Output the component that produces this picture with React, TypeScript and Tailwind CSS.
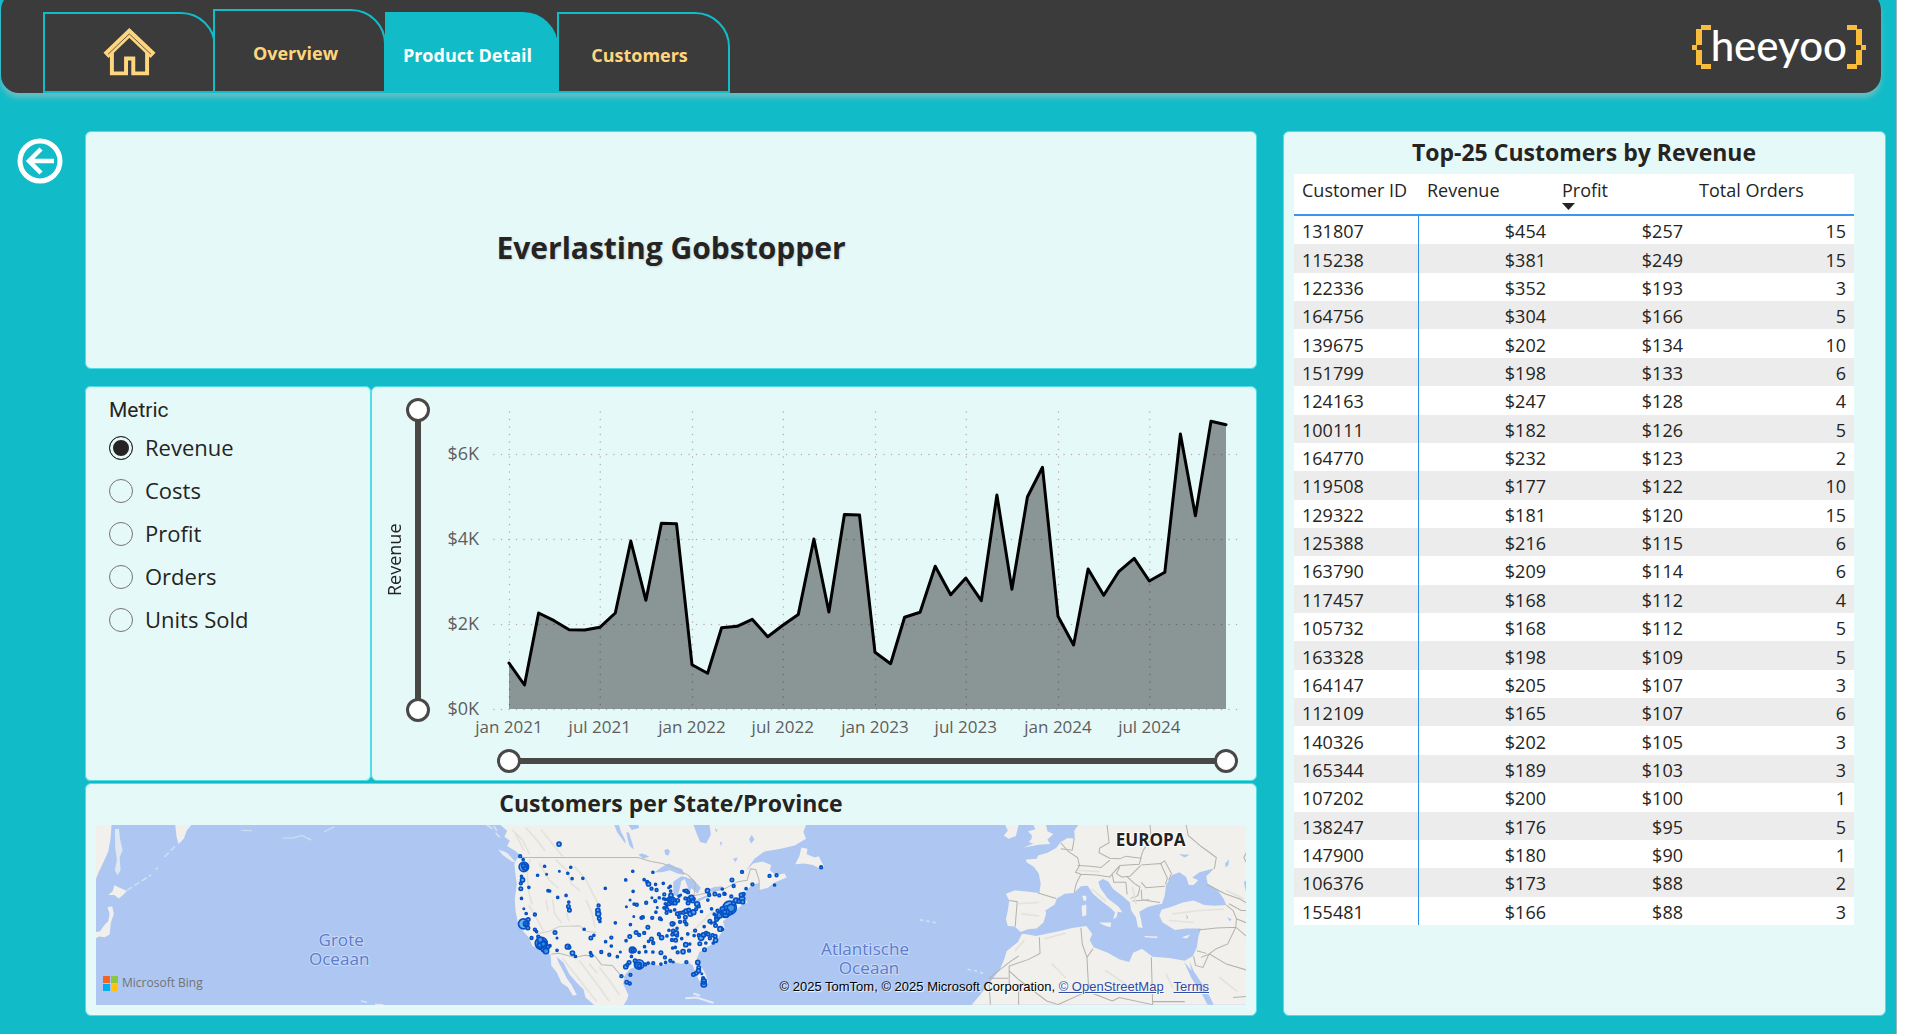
import { useState } from 'react';

const tabs = [
    { label: 'Overview', active: false, height: 'h-[84px]' },
    { label: 'Product Detail', active: true, height: 'h-[81px]' },
    { label: 'Customers', active: false, height: 'h-[81px]' },
];

const metrics = ['Revenue', 'Costs', 'Profit', 'Orders', 'Units Sold'];

const customers: [number, number, number, number][] = [
    [131807, 454, 257, 15],
    [115238, 381, 249, 15],
    [122336, 352, 193, 3],
    [164756, 304, 166, 5],
    [139675, 202, 134, 10],
    [151799, 198, 133, 6],
    [124163, 247, 128, 4],
    [100111, 182, 126, 5],
    [164770, 232, 123, 2],
    [119508, 177, 122, 10],
    [129322, 181, 120, 15],
    [125388, 216, 115, 6],
    [163790, 209, 114, 6],
    [117457, 168, 112, 4],
    [105732, 168, 112, 5],
    [163328, 198, 109, 5],
    [164147, 205, 107, 3],
    [112109, 165, 107, 6],
    [140326, 202, 105, 3],
    [165344, 189, 103, 3],
    [107202, 200, 100, 1],
    [138247, 176, 95, 5],
    [147900, 180, 90, 1],
    [106376, 173, 88, 2],
    [155481, 166, 88, 3],
];

// monthly revenue, jan 2021 - dec 2024
const revenue = [
    1082, 565, 2259, 2078, 1867, 1859, 1922, 2259, 3953, 2557, 4369, 4361,
    1043, 839, 1914, 1945, 2110, 1702, 1969, 2227, 4000, 2282, 4573, 4565,
    1333, 1067, 2157, 2275, 3357, 2690, 3082, 2549, 5035, 2816, 4988, 5686,
    2180, 1506, 3294, 2675, 3231, 3545, 3012, 3216, 6471, 4549, 6769, 6690,
];

const DAY = 86400000;
const START = Date.UTC(2021, 0, 1);
const END = Date.UTC(2024, 11, 1);
const PLOT = { left: 67, right: 784, base: 322, perK: 42.5 };

const xAt = (month: number) => {
    const t = Date.UTC(2021, month, 1);
    return PLOT.left + ((t - START) / DAY) * ((PLOT.right - PLOT.left) / ((END - START) / DAY));
};
const yAt = (value: number) => PLOT.base - (value / 1000) * PLOT.perK;

const xTicks = [0, 6, 12, 18, 24, 30, 36, 42];
const yTicks = [0, 2, 4, 6];

function RevenueChart() {
    const line = revenue.map((v, i) => `${xAt(i).toFixed(1)},${yAt(v).toFixed(1)}`).join(' ');
    return (
        <svg viewBox="0 0 814 354" className="block w-full" role="img" aria-label="Revenue per month">
            <g stroke="#b9a9ad" strokeWidth="1.5" strokeLinecap="round" strokeDasharray="0 7.5">
                {yTicks.map((t) => (
                    <line key={t} x1="52" x2="800" y1={yAt(t * 1000) + 0.5} y2={yAt(t * 1000) + 0.5} />
                ))}
                {xTicks.map((m) => (
                    <line key={m} x1={xAt(m) + 0.5} x2={xAt(m) + 0.5} y1="25" y2="322" />
                ))}
            </g>
            <polygon points={`${PLOT.left},${PLOT.base} ${line} ${PLOT.right},${PLOT.base}`} fill="#000" fillOpacity="0.4" />
            <polyline points={line} fill="none" stroke="#000" strokeWidth="3" strokeLinejoin="round" strokeLinecap="round" />
            <g fill="#605e5c" fontSize="18" textAnchor="end">
                {yTicks.map((t) => (
                    <text key={t} x="37" y={yAt(t * 1000) + 6}>{`$${t}K`}</text>
                ))}
            </g>
            <g fill="#605e5c" fontSize="17" textAnchor="middle">
                {xTicks.map((m) => (
                    <text key={m} x={xAt(m)} y="346">
                        {`${m % 12 === 0 ? 'jan' : 'jul'} ${2021 + Math.floor(m / 12)}`}
                    </text>
                ))}
            </g>
        </svg>
    );
}

const thumb =
    'pointer-events-none absolute inset-0 m-0 h-full w-full appearance-none bg-transparent [&::-webkit-slider-thumb]:pointer-events-auto [&::-webkit-slider-thumb]:h-6 [&::-webkit-slider-thumb]:w-6 [&::-webkit-slider-thumb]:appearance-none [&::-webkit-slider-thumb]:rounded-full [&::-webkit-slider-thumb]:border-3 [&::-webkit-slider-thumb]:border-[#4a4846] [&::-webkit-slider-thumb]:bg-white';

function ZoomSlider({ vertical = false }: { vertical?: boolean }) {
    const axis = vertical ? 'Y axis' : 'X axis';
    const dir = vertical ? ' [writing-mode:vertical-lr] [direction:rtl]' : '';
    return (
        <div className={vertical ? 'relative flex h-[324px] w-6 justify-center py-3' : 'relative flex h-6 w-full items-center px-3'}>
            <div className={vertical ? 'h-full w-1.5 bg-[#4a4846]' : 'h-1.5 w-full bg-[#4a4846]'} />
            <input type="range" aria-label={`${axis} zoom start`} defaultValue={0} className={thumb + dir} />
            <input type="range" aria-label={`${axis} zoom end`} defaultValue={100} className={thumb + dir} />
        </div>
    );
}

// [x, y, radius] of each customer location
const bubbles: [number, number, number][] = [
    [239, 132, 7], [123, 168, 5], [132, 178, 4], [134, 200, 15], [137, 200, 9], [127, 228, 4], [130, 239, 7], [125, 249, 5], [125, 265, 6],
    [149, 261, 4], [127, 294, 4], [134, 325, 3], [141, 339, 4], [167, 342, 5], [133, 370, 16], [141, 370, 9], [147, 357, 6], [146, 382, 6],
    [167, 387, 5], [172, 393, 4], [157, 412, 5], [177, 408, 5], [186, 428, 19], [188, 432, 15], [183, 418, 9], [194, 445, 9], [200, 451, 9],
    [206, 438, 6], [212, 435, 4], [196, 198, 4], [175, 225, 4], [202, 222, 3], [240, 213, 3], [274, 201, 4], [265, 219, 4], [278, 235, 4],
    [310, 234, 4], [206, 271, 4], [211, 272, 4], [235, 291, 4], [260, 285, 4], [268, 305, 4], [267, 318, 6], [270, 329, 6], [377, 264, 4],
    [357, 315, 5], [355, 330, 7], [356, 340, 8], [359, 354, 6], [361, 363, 4], [407, 367, 4], [314, 386, 4], [227, 396, 6], [233, 412, 3],
    [233, 449, 4], [265, 438, 8], [270, 440, 5], [279, 457, 7], [288, 467, 4], [334, 412, 6], [343, 404, 4], [378, 423, 4], [395, 411, 5],
    [395, 436, 4], [365, 454, 5], [333, 456, 4], [336, 464, 5], [389, 462, 5], [413, 468, 4], [422, 454, 3], [459, 213, 4], [438, 239, 4],
    [519, 216, 4], [493, 238, 4], [502, 245, 5], [506, 251, 7], [527, 252, 4], [515, 265, 5], [530, 269, 5], [550, 249, 4], [460, 273, 4],
    [451, 299, 3], [440, 319, 3], [463, 311, 4], [471, 313, 5], [499, 307, 5], [516, 292, 3], [526, 302, 5], [538, 292, 4], [532, 321, 3],
    [528, 335, 4], [553, 282, 5], [551, 295, 4], [557, 297, 4], [571, 258, 4], [566, 262, 3], [572, 272, 4], [573, 285, 7], [570, 297, 8],
    [577, 302, 12], [585, 307, 7], [567, 310, 6], [593, 300, 6], [597, 287, 4], [602, 284, 3], [612, 271, 4], [619, 272, 6], [624, 276, 5],
    [616, 294, 5], [628, 297, 8], [634, 292, 8], [638, 302, 6], [624, 308, 6], [642, 295, 4], [651, 311, 8], [656, 318, 5], [552, 322, 4],
    [561, 327, 6], [560, 337, 5], [572, 332, 4], [584, 328, 4], [592, 340, 6], [597, 349, 5], [600, 337, 5], [610, 336, 6], [618, 332, 7],
    [626, 329, 6], [631, 340, 8], [640, 335, 8], [616, 350, 6], [664, 333, 4], [648, 326, 5], [462, 348, 3], [485, 352, 5], [489, 350, 5],
    [517, 352, 5], [540, 354, 5], [544, 357, 4], [600, 364, 5], [614, 363, 5], [619, 371, 5], [577, 370, 7], [582, 369, 4], [504, 380, 6],
    [452, 372, 4], [591, 383, 4], [567, 389, 4], [580, 391, 6], [588, 398, 8], [577, 402, 5], [591, 405, 5], [623, 400, 4], [645, 390, 5],
    [642, 405, 4], [450, 408, 6], [439, 420, 4], [469, 396, 6], [478, 403, 5], [493, 397, 5], [515, 415, 6], [520, 427, 5], [506, 422, 4],
    [537, 401, 5], [545, 411, 7], [561, 406, 4], [576, 418, 5], [587, 419, 6], [605, 414, 4], [494, 438, 4], [458, 448, 10], [464, 449, 6],
    [478, 455, 4], [498, 453, 4], [519, 454, 4], [543, 456, 6], [578, 442, 4], [586, 440, 4], [593, 455, 5], [609, 453, 7], [617, 432, 7],
    [629, 430, 4], [627, 450, 5], [555, 470, 5], [571, 480, 5], [557, 485, 4], [543, 490, 4], [580, 484, 3], [520, 487, 5], [505, 487, 4],
    [496, 491, 5], [478, 491, 15], [476, 494, 10], [466, 480, 6], [455, 467, 4], [448, 485, 6], [438, 498, 7], [443, 492, 5], [425, 526, 5],
    [452, 522, 5], [441, 544, 6], [450, 548, 5], [619, 484, 5], [653, 485, 7], [656, 500, 6], [655, 510, 7], [648, 517, 6], [640, 521, 6],
    [665, 519, 3], [669, 532, 5], [671, 541, 8], [671, 550, 9], [659, 429, 6], [677, 427, 4], [663, 411, 9], [670, 403, 7], [678, 398, 6],
    [684, 401, 6], [689, 413, 5], [697, 404, 5], [705, 407, 6], [706, 419, 7], [699, 427, 4], [656, 404, 5], [673, 447, 6], [672, 378, 4],
    [689, 362, 6], [693, 367, 4], [706, 375, 6], [720, 385, 8], [727, 386, 4], [704, 366, 4], [711, 350, 8], [718, 344, 9], [709, 357, 6],
    [748, 322, 21], [730, 335, 12], [735, 338, 14], [741, 331, 16], [752, 323, 12], [727, 326, 8], [702, 341, 4], [694, 325, 4], [712, 331, 5],
    [736, 342, 9], [740, 334, 8], [733, 334, 7], [760, 308, 7], [767, 300, 8], [776, 302, 7], [785, 295, 9], [787, 304, 7], [783, 284, 7],
    [790, 281, 5], [753, 288, 5], [732, 280, 5], [726, 266, 4], [717, 285, 5], [704, 281, 6], [682, 271, 7], [687, 284, 5], [683, 299, 4],
    [760, 257, 5], [755, 239, 6], [785, 215, 5], [816, 252, 5], [797, 265, 4], [867, 227, 5], [888, 225, 5], [882, 254, 4], [1021, 201, 5],
    [734, 281, 4], [556, 310, 4], [560, 318, 4], [138, 204, 6], [132, 196, 6], [142, 372, 5], [186, 434, 9], [192, 430, 8], [181, 434, 7],
    [577, 300, 6], [573, 305, 5], [631, 299, 4], [458, 448, 5], [479, 495, 6], [671, 546, 5],
];

function CustomerMap() {
    return (
        <svg viewBox="0 0 1150 179" preserveAspectRatio="xMidYMid slice" className="absolute inset-0 h-full w-full" role="img" aria-label="Map of customers per state or province">
            <rect width="1150" height="179" fill="#adc7f2" />
            {/* east asia and the kurils */}
            <g transform="translate(-16 -55) scale(0.3333)" fill="#f1f0ec">
                <path d="M48 165H104L101 205L94 245L78 280L66 305L58 325L48 332Z" />
                <path d="M114 178L126 176L130 210L137 240L128 262L131 300L122 315L114 300L120 268L115 235Z" fill="#dfe7f1" />
                <path d="M112 344L128 352L150 362L138 374L126 384L112 374L94 374L108 362Z" />
                <path d="M92 410L106 408L111 430L102 456L98 492L84 500L66 498L48 508V486L70 482L84 462L94 452L98 430Z" />
                <path d="M294 165H342L328 182L320 205L304 222L298 200Z" />
                <path d="M150 360L222 314M236 298L242 292M262 260L296 226" stroke="#cfdcf3" strokeWidth="5" strokeDasharray="18 8" fill="none" />
                <path d="M492 181L524 182M614 204L644 204L672 196L700 210M738 186L768 170" stroke="#cfdcf0" strokeWidth="4" fill="none" />
                <path d="M848 690L866 694M890 700L915 701" stroke="#dde6f2" strokeWidth="4" />
            </g>
            {/* north america */}
            <g transform="translate(384 -25) scale(0.3333)">
                <path
                    d="M64 75L84 92L76 110L92 122L84 138L108 152L124 166L112 178L106 190L108 215L113 250L107 296L109 330L116 366L132 392L148 410L160 436L190 452L214 462L216 494L232 514L246 546L266 560L280 584L292 582L276 552L262 532L250 508L238 486L232 468L252 486L270 520L292 546L312 566L318 590L344 612H432L442 596L446 582L438 566L430 548L436 522L452 504L480 494L512 486L534 494L560 490L582 484L604 490L622 482L638 494L648 520L660 544L676 560L684 545L676 520L662 494L650 474L658 454L682 438L704 426L720 402L734 384L728 362L752 344L786 312L802 306L790 290L800 268L818 252L838 248L834 270L862 262L884 246L918 232L912 220L886 224L868 210L872 194L846 184L818 190L796 212L822 176L852 154L900 146L942 136L976 116L968 96L976 75Z"
                    fill="#f1f0ec"
                />
                <path d="M944 192L956 168L962 142L980 146L978 162L1002 172L1014 168L1030 200L1016 204L996 194L970 190Z" fill="#f1f0ec" />
                <path d="M58 148L84 158L110 186L98 184L70 164Z" fill="#e9edf1" />
                <path d="M24 75L40 86M50 98L62 112M44 78L54 92" stroke="#d6e1f1" strokeWidth="5" />
                <path d="M616 592L650 590L700 606M640 578L660 584" stroke="#e6ebf0" strokeWidth="6" fill="none" />
                <g fill="#adc7f2">
                    <path d="M640 75L650 102L660 126L678 130L692 104L688 75Z" />
                    <path d="M404 75L418 76L424 96L436 118L438 132L428 118L412 96Z" />
                    <path d="M440 96L448 98L458 130L462 148L450 138L444 118Z" />
                    <path d="M446 75L476 75L478 84L456 90Z" />
                    <path d="M524 216L546 200L566 190L588 200L606 206L614 224L592 220L570 210L546 216Z" />
                    <path d="M580 244L604 228L622 232L604 242L598 270L592 288L580 284Z" />
                    <path d="M612 230L640 238L662 262L652 280L634 264L628 274L620 252Z" />
                    <path d="M638 304L656 294L692 280L684 290L658 302Z" />
                    <path d="M684 268L702 260L726 258L722 268L696 274Z" />
                    <path d="M553 150L562 146L570 152L566 166L556 164ZM476 164L486 160L498 164L508 170L490 176ZM704 84L712 90L708 98ZM806 118L814 104L822 118L812 130ZM718 124L726 128L722 138ZM758 176L772 172L766 186Z" />
                </g>
                <g fill="none" stroke="#b9b8b3" strokeWidth="3">
                    <path d="M126 172H474L514 184L548 190L590 206L626 226L646 248L642 286L690 276L736 264L772 244L800 240L810 206L826 208L836 240V272" />
                    <path d="M216 460L240 458L286 470L316 464L346 466L366 492L398 494L420 520L440 532" />
                    <path d="M170 400L210 392L240 378L300 376L320 392L350 396" stroke="#d2d0ca" />
                </g>
                <g fill="none" stroke="#e4e2dc" strokeWidth="5" strokeLinecap="round">
                    <path d="M100 90L130 120L150 160M140 84L166 112L196 150M186 90L210 120L248 166M110 104L134 150" />
                    <path d="M152 180L144 220L148 270L158 310M180 190L210 240L236 262M230 180L262 210L276 250L300 270M286 200L320 240L340 280L356 312" />
                    <path d="M150 316L170 350L192 390M220 300L226 340L246 366M262 340L268 360M320 300L338 340L346 380M200 300L206 330" />
                    <path d="M250 474L284 516L318 560L350 600M300 480L330 520L360 560L388 600M360 500L390 540L418 580M330 490L352 516" />
                    <path d="M700 330L680 350L650 380L620 410" />
                </g>
            </g>
            {/* europe, north africa and the middle east */}
            <g transform="translate(774 -55) scale(0.3333)">
                <path
                    d="M618 165L606 182L608 206L586 204L566 216L552 234L526 248L498 256L494 266L462 268L464 276L486 290L500 310L506 340L502 368L470 364L430 360L402 370L412 390L408 420L402 446L408 466L428 468L446 484L468 476L494 474L514 456L522 430L520 420L548 402L554 384L578 370L604 368L626 348L646 346L662 370L690 394L716 414L728 426L722 446L732 440L736 424L750 426L738 408L706 384L684 354L678 334L692 326L708 334L722 356L752 378L772 396L776 420L790 440L796 470L810 472L806 450L800 424L826 410L848 404L868 400L876 376L880 344L898 314L920 306L940 320L948 344L962 344L976 330L958 322L980 306L1024 294L1000 318L1004 340L1036 362L1052 386L1060 404L1024 406L994 404L962 390L930 396L894 410L866 418L860 436L870 456L906 478L940 474L984 474L976 500L972 530L960 556L936 570L890 562L840 558L808 534L782 546L770 574L742 566L706 546L664 530L652 508L660 490L642 466L600 472L560 482L520 490L492 496L460 490L450 490L438 514L404 542L398 564L384 596L350 640L322 676L300 701H1128V165Z"
                    fill="#f1f0ec"
                />
                <path d="M484 165L490 178L468 184L480 196L478 208L470 216L484 220L456 232L500 224L534 222L526 208L544 192L526 184L522 165Z" fill="#f1f0ec" />
                <path d="M400 165L408 182L396 196L410 206L432 198L440 165Z" fill="#f1f0ec" />
                <path d="M630 376H642V390L634 392ZM628 406L642 402V434L630 438ZM680 456L716 456L714 470L694 464ZM816 496L854 498V502L816 500ZM926 500L952 492L942 504Z" fill="#f1f0ec" />
                <path d="M288 596L312 600L334 608M146 448L200 458" stroke="#d3dff2" strokeWidth="5" strokeDasharray="10 9" fill="none" />
                <g fill="#adc7f2">
                    <path d="M934 574L946 588L956 600L950 572L962 600L988 640L1012 680L1022 701H1004L984 664L956 622Z" />
                    <path d="M1128 322L1112 336L1118 362L1128 372Z" />
                    <path d="M1056 280L1068 268L1066 284L1058 292ZM918 252L950 254L936 262ZM1062 440L1076 446L1070 452ZM940 430L946 440L942 448Z" />
                </g>
                <g fill="none" stroke="#b3b1ab" strokeWidth="3">
                    <path d="M704 165L710 218L682 234L680 248L712 264L742 266L760 258L804 264L812 240L836 206L832 165M940 165L946 196L986 230L1030 262L1024 296" />
                    <path d="M566 218L588 244L616 262L622 286L610 306L626 312L612 340L606 366M616 286L656 288L686 292L712 270M626 312L672 314L712 320L742 286L800 282L806 262M742 290L732 310L748 320L772 318L804 286M806 284L864 280L884 324L878 342" />
                    <path d="M606 206L600 240L566 236M720 314L724 336L760 336L764 372M764 320L786 340L802 350L796 376L774 384M806 336L820 352L876 348M806 358L808 388L862 396M780 392L830 388M864 280L876 272L896 310L888 330" />
                    <path d="M498 368L552 384M412 390L436 394L432 440L430 468M1002 342L1056 370L1100 386L1128 402M976 478L1030 472L1088 470L1128 504M1060 404L1080 420L1090 444L1088 470L1064 520L1030 534L1008 550L990 590L968 584L962 556M1068 400L1104 420L1128 420M1088 444L1128 460" />
                    <path d="M626 472L630 520L644 560L662 534M644 560L648 636L662 668L720 690M502 500L504 548L470 566L412 586L412 640M440 556L416 572L352 622H408M836 560L840 701M840 692H936M412 600L440 626L524 690L560 701M440 640V701M560 700L648 660M720 690L740 680L840 701M984 560L1010 550L1060 580L1128 600M1128 232L1112 262L1128 292" />
                    <path d="M1080 680L1128 676M352 640L356 701M972 540L1000 548" />
                </g>
                <g fill="none" stroke="#e4e2dc" strokeWidth="5" strokeLinecap="round">
                    <path d="M456 510L430 540M520 504L580 488M440 400L500 396M450 430L500 436M660 356L700 392M620 300L680 304M900 430L980 420L1050 416M890 450L960 456M1060 360L1110 384M780 350L790 400" />
                    <path d="M540 580L580 620M700 600L760 640M880 610L900 650M1040 620L1090 660" />
                </g>
            </g>
            <g transform="translate(384 -25) scale(0.3333)" fill="#4a9cee" stroke="#0450c4" strokeWidth="5">
                {bubbles.map(([x, y, r], i) => (
                    <circle key={i} cx={x} cy={y} r={r - 1} fillOpacity="0.8" />
                ))}
            </g>
            <g textAnchor="middle" fontSize="17" fill="#5b7bcd" stroke="#c9d9f6" strokeWidth="2" paintOrder="stroke">
                <text x="247" y="120">Grote</text>
                <text x="245" y="139">Oceaan</text>
                <text x="768" y="129">Atlantische</text>
                <text x="772" y="148">Oceaan</text>
            </g>
            <text x="1052" y="21" textAnchor="middle" fontSize="17" fontWeight="700" fill="#222" stroke="#fff" strokeWidth="2" paintOrder="stroke">
                EUROPA
            </text>
        </svg>
    );
}

function BingLogo() {
    return (
        <svg viewBox="0 0 15 15" className="h-[15px] w-[15px]" aria-hidden="true">
            <rect width="7" height="7" fill="#f26522" />
            <rect x="8" width="7" height="7" fill="#8dc63f" />
            <rect y="8" width="7" height="7" fill="#00aeef" />
            <rect x="8" y="8" width="7" height="7" fill="#ffc20e" />
        </svg>
    );
}

function HomeIcon() {
    return (
        <svg viewBox="306 80 159 146" className="h-12 w-[53px]" fill="none" aria-hidden="true">
            <path d="M332 155V218H375V173H397V218H439V155" stroke="#ffd57e" strokeWidth="12" />
            <path d="M314 163L385 95L457 163" stroke="#ffd57e" strokeWidth="22" />
            <path d="M320 160L385 98L451 160" stroke="#3b3b3b" strokeOpacity="0.8" strokeWidth="3" />
        </svg>
    );
}

function Brace({ flip = false }: { flip?: boolean }) {
    return (
        <svg viewBox="0 0 19 44" className={flip ? 'h-11 w-[19px] -scale-x-100' : 'h-11 w-[19px]'} fill="#f9bd3a" aria-hidden="true">
            <path d="M9 0H19V5H9ZM4 4H10V20H4ZM0 20H5V25H0ZM4 25H10V40H4ZM9 39H19V44H9Z" />
        </svg>
    );
}

const panel = 'rounded-md border border-[#4fdde6] bg-[#e6f9f9]';
const tab = 'flex w-[173px] items-center justify-center rounded-tr-[35px] border-2 border-[#11bcc8]';

export default function App() {
    const [metric, setMetric] = useState('Revenue');

    return (
        <div className="min-h-screen bg-white pr-[11px] font-['Open_Sans','Noto_Sans',sans-serif] text-[#252423]">
            <div className="flex min-h-screen flex-col overflow-hidden border-r border-[#9fb4b8] bg-[#11bcc8]">
                <header className="-mt-2 mr-[15px] ml-px flex h-[101px] shrink-0 items-end rounded-[18px] bg-[#3b3b3b] pl-[42px] shadow-[0_5px_5px_rgba(200,190,190,0.45)]">
                    <nav className="flex items-end text-lg font-bold">
                        <a href="#home" aria-label="Home" className={`${tab} -mr-[3px] h-[81px] pb-0.5`}>
                            <HomeIcon />
                        </a>
                        {tabs.map(({ label, active, height }) => (
                            <a
                                key={label}
                                href={`#${label}`}
                                className={`${tab} ${height} -mr-px pt-1 pr-2 ${active ? 'bg-[#11bcc8] text-white' : 'bg-[#3b3b3b] text-[#ffd57e]'}`}
                            >
                                {label}
                            </a>
                        ))}
                    </nav>
                    <div className="mr-[15px] mb-6 ml-auto flex h-11 items-center font-[Lato] text-[42px] leading-10 font-medium text-white">
                        <Brace />
                        <span className="h-11">heeyoo</span>
                        <Brace flip />
                    </div>
                </header>

                <div className="flex flex-1 pt-[38px] pr-2.5 pb-[18px]">
                    <div className="w-[85px] shrink-0 pt-[7px] pl-[17px]">
                        <button type="button" aria-label="Back" className="block">
                            <svg viewBox="0 0 46 46" className="h-[46px] w-[46px]" fill="none" stroke="#fff" aria-hidden="true">
                                <circle cx="23" cy="23" r="20" strokeWidth="5" />
                                <path d="M37 23H12M24 11L12 23L24 35" strokeWidth="4.5" />
                            </svg>
                        </button>
                    </div>

                    <main className="grid flex-1 grid-cols-[1172fr_603fr] gap-[26px]">
                        <div className="flex min-w-0 flex-col">
                            <section className={`${panel} mb-[17px] flex h-[238px] items-center justify-center pb-1`}>
                                <h1 className="text-[30px] leading-10 font-bold [text-shadow:1px_1px_2px_rgba(0,0,0,0.15)]">Everlasting Gobstopper</h1>
                            </section>

                            <div className="mb-0.5 flex h-[395px]">
                                <fieldset className={`${panel} w-[286px] shrink-0 pt-2 pl-[23px]`}>
                                    <legend className="float-left w-full font-[Roboto] text-[21px] leading-[31px]">Metric</legend>
                                    {metrics.map((m) => (
                                        <label key={m} className="clear-both flex h-[43px] items-center gap-3 text-[22px]">
                                            <input
                                                type="radio"
                                                name="metric"
                                                checked={metric === m}
                                                onChange={() => setMetric(m)}
                                                className="m-0 h-6 w-6 appearance-none rounded-full border border-[#767472] checked:border-[#252423] checked:bg-[#252423] checked:shadow-[inset_0_0_0_3px_#e6f9f9]"
                                            />
                                            {m}
                                        </label>
                                    ))}
                                </fieldset>

                                <section className={`${panel} flex min-w-0 flex-1 flex-col`}>
                                    <div className="flex">
                                        <div className="flex w-[70px] shrink-0 items-start pt-[11px] pl-2.5">
                                            <span className="h-[324px] rotate-180 text-center text-lg leading-6 [writing-mode:vertical-rl]">Revenue</span>
                                            <ZoomSlider vertical />
                                        </div>
                                        <div className="min-w-0 flex-1">
                                            <RevenueChart />
                                        </div>
                                    </div>
                                    <div className="mt-2 pr-[18px] pl-[125px]">
                                        <ZoomSlider />
                                    </div>
                                </section>
                            </div>

                            <section className={`${panel} flex h-[233px] flex-col px-2.5 pb-2.5`}>
                                <h2 className="h-[41px] text-center text-[23px] leading-[38px] font-bold">Customers per State/Province</h2>
                                <div className="relative flex-1 overflow-hidden">
                                    <CustomerMap />
                                    <div className="absolute bottom-3 left-[7px] flex items-center gap-1 text-xs leading-5 text-[#737373]">
                                        <BingLogo />
                                        Microsoft Bing
                                    </div>
                                    <p className="absolute right-[37px] bottom-2 font-['Liberation_Sans',sans-serif] text-[13px] leading-5 text-black [text-shadow:1px_1px_1px_#fff]">
                                        © 2025 TomTom, © 2025 Microsoft Corporation,{' '}
                                        <a href="#osm" className="text-[#2f4ba8] underline">© OpenStreetMap</a>
                                        <a href="#terms" className="ml-2.5 text-[#2f4ba8] underline">Terms</a>
                                    </p>
                                </div>
                            </section>
                        </div>

                        <section className={`${panel} pr-[31px] pl-2.5`}>
                            <h2 className="-mr-5 h-[42px] text-center text-[23px] leading-10 font-bold">Top-25 Customers by Revenue</h2>
                            <table className="h-[751px] w-full border-separate border-spacing-0 bg-white text-lg leading-[26px]">
                                <thead>
                                    <tr className="h-[42px] text-left align-top [&>th]:border-b-2 [&>th]:border-[#3a96f0] [&>th]:px-2 [&>th]:pt-[3px] [&>th]:font-normal">
                                        <th className="w-[125px] pb-0 whitespace-nowrap">Customer ID</th>
                                        <th className="w-[135px] pb-0">Revenue</th>
                                        <th className="w-[137px] pb-0" aria-sort="descending">
                                            Profit
                                            <svg viewBox="0 0 13 7" className="block h-[7px] w-[13px]" aria-hidden="true">
                                                <path d="M0 0H13L6.5 7Z" fill="#252423" />
                                            </svg>
                                        </th>
                                        <th className="pb-0">Total Orders</th>
                                    </tr>
                                </thead>
                                <tbody>
                                    {customers.map(([id, rev, profit, orders]) => (
                                        <tr key={id} className="text-right even:bg-[#ececec] [&>td]:px-2 [&>td]:pt-0.5 [&>td]:pb-0">
                                            <td className="border-r border-[#2b8fee] text-left">{id}</td>
                                            <td>${rev}</td>
                                            <td>${profit}</td>
                                            <td>{orders}</td>
                                        </tr>
                                    ))}
                                </tbody>
                            </table>
                        </section>
                    </main>
                </div>
            </div>
        </div>
    );
}
